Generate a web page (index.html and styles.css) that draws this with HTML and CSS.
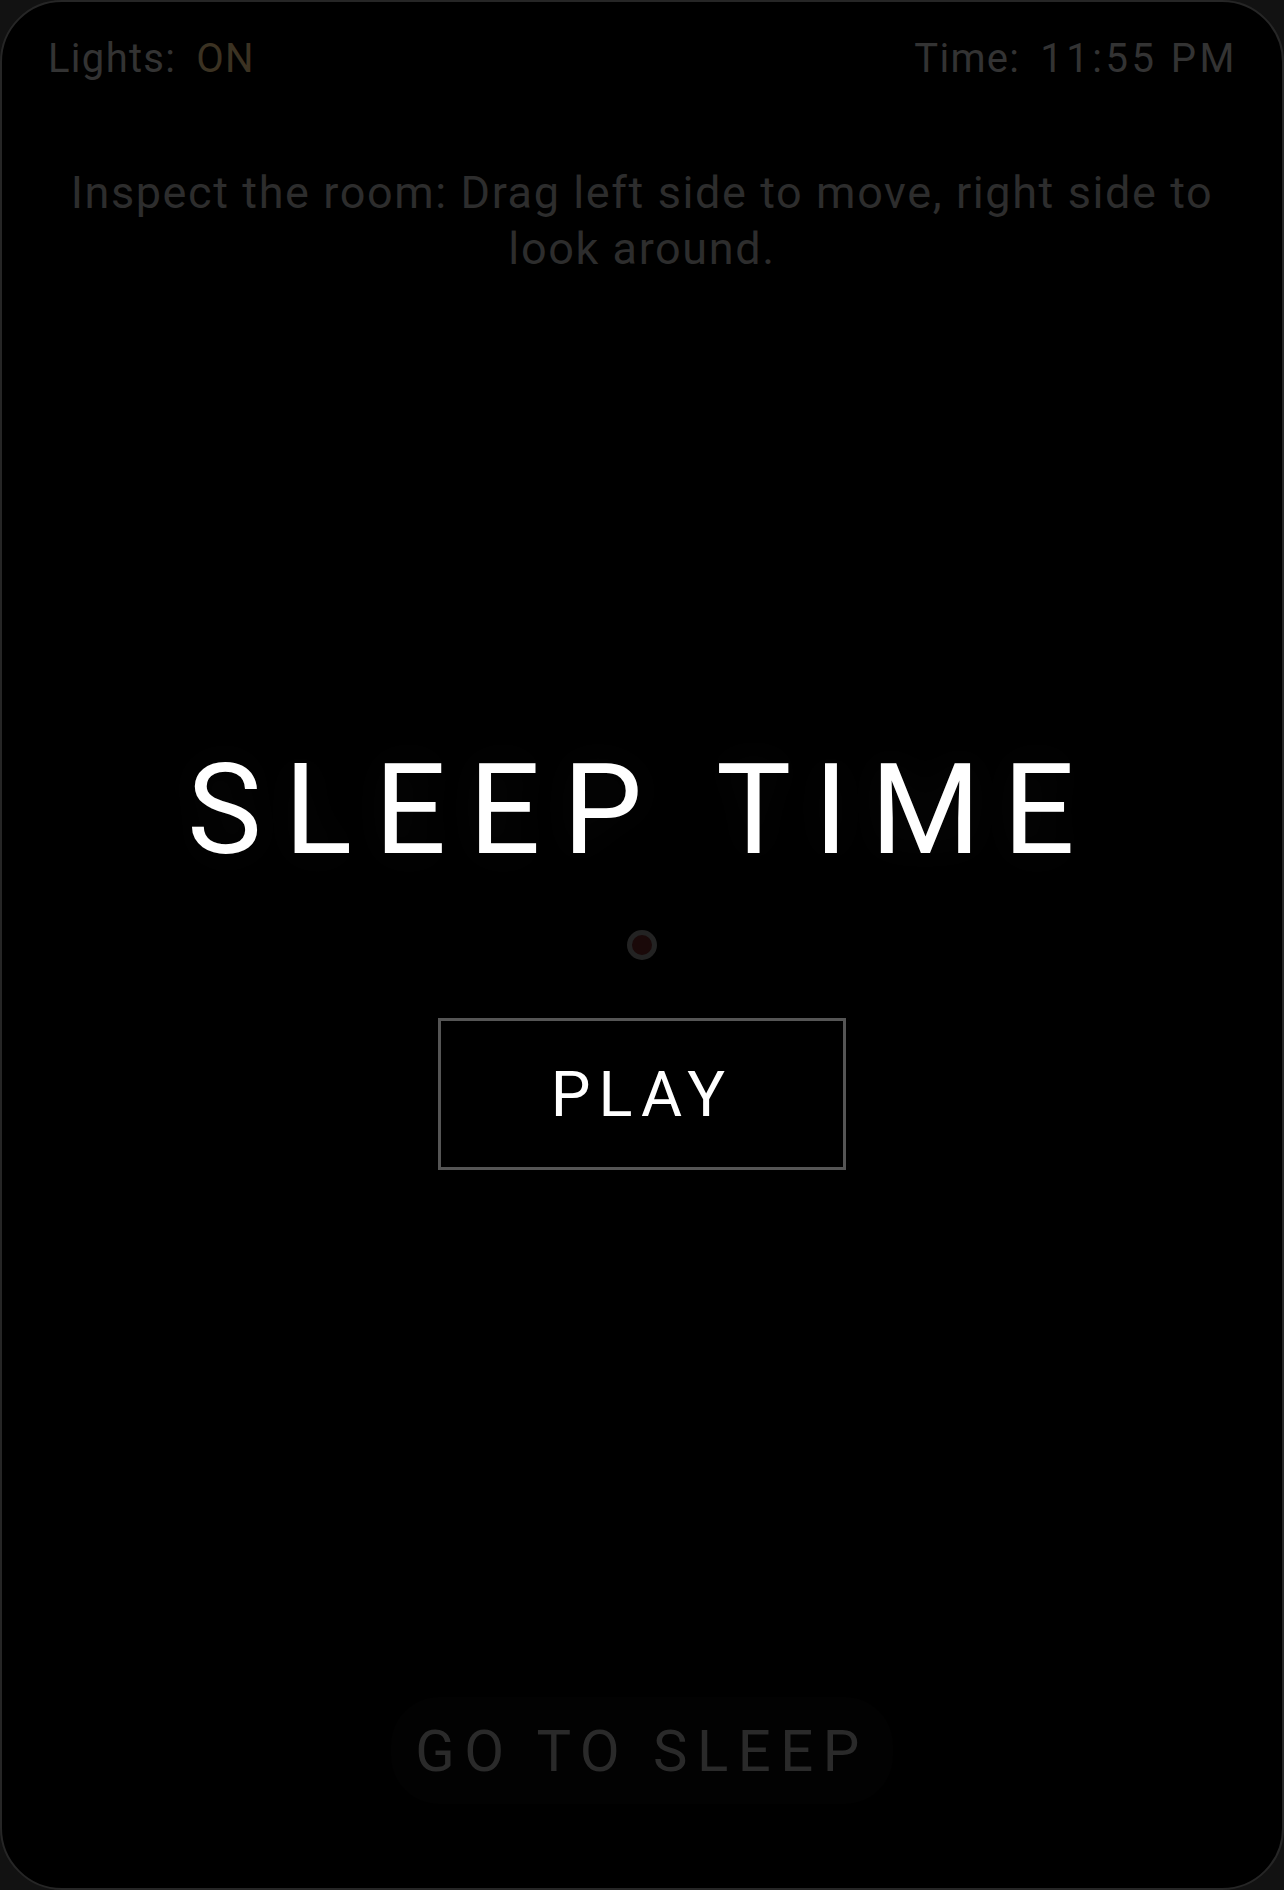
FILE: index.html
```html
<!DOCTYPE html>
<html lang="en">
<head>
<meta charset="utf-8">
<title>Sleep Time</title>
<link rel="stylesheet" href="styles.css">
</head>
<body>
<div class="screen">
  <div class="topbar">
    <div class="stat"><span class="label">Lights:</span><span class="value on">ON</span></div>
    <div class="stat"><span class="label">Time:</span><span class="value clock">11:55 PM</span></div>
  </div>
  <p class="hint">Inspect the room: Drag left side to move, right side to look around.</p>
  <h1 class="title">SLEEP TIME</h1>
  <div class="dot"></div>
  <button class="play">PLAY</button>
  <button class="sleep">GO TO SLEEP</button>
</div>
</body>
</html>
```
FILE: styles.css
```css
html, body {
  margin: 0;
  padding: 0;
  background: #121212;
}
.screen {
  box-sizing: border-box;
  width: 1284px;
  height: 1890px;
  background: #000;
  border: 2px solid #262626;
  border-radius: 62px;
  display: flex;
  flex-direction: column;
  align-items: center;
  overflow: hidden;
  font-family: Roboto, "Noto Sans", sans-serif;
}
.topbar {
  box-sizing: border-box;
  width: 100%;
  display: flex;
  justify-content: space-between;
  padding: 33px 44px 0 46px;
  font-size: 40px;
  line-height: 48px;
  letter-spacing: 1.3px;
}
.stat {
  display: flex;
  gap: 20px;
}
.label, .value {
  color: #333333;
}
.value.on {
  color: #3b3222;
}
.value.clock {
  letter-spacing: 3.5px;
}
.hint {
  margin: 82px 0 0;
  width: 1180px;
  text-align: center;
  font-size: 45px;
  line-height: 56px;
  letter-spacing: 1.6px;
  color: #2d2d2d;
}
.title {
  margin: 470px 0 0;
  font-family: Roboto, "Noto Sans", sans-serif;
  font-weight: 400;
  font-size: 126px;
  line-height: 126px;
  letter-spacing: 22.5px;
  color: #ffffff;
  text-shadow: 0 0 40px rgba(255, 255, 255, 0.04);
}
.dot {
  margin-top: 57px;
  box-sizing: border-box;
  width: 30px;
  height: 30px;
  border-radius: 50%;
  border: 5px solid #232323;
  background: #1a0909;
}
.play {
  margin-top: 58px;
  box-sizing: border-box;
  width: 408px;
  height: 152px;
  background: #000;
  border: 3px solid #555555;
  color: #ffffff;
  font-family: Roboto, "Noto Sans", sans-serif;
  font-size: 63px;
  letter-spacing: 8px;
  padding: 0;
  cursor: pointer;
}
.sleep {
  margin-top: auto;
  margin-bottom: 84px;
  box-sizing: border-box;
  width: 502px;
  height: 107px;
  border: none;
  border-radius: 48px;
  background: #020202;
  color: #2a2a2a;
  font-family: Roboto, "Noto Sans", sans-serif;
  font-size: 58px;
  letter-spacing: 9.5px;
  padding: 0;
  cursor: pointer;
}
```
